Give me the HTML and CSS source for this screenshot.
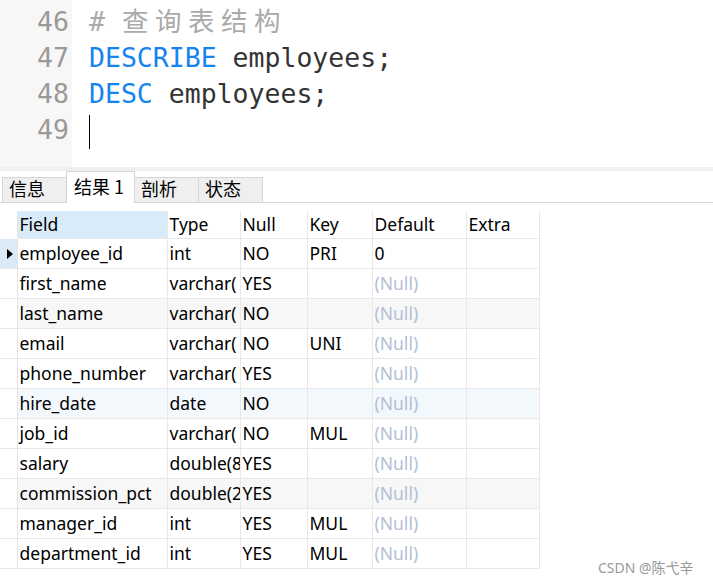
FILE: index.html
```
<!DOCTYPE html>
<html>
<head>
<meta charset="utf-8">
<link rel="stylesheet" href="styles.css">
</head>
<body>
<div class="editor">
  <div class="gutter">
    <div class="ln">46</div>
    <div class="ln">47</div>
    <div class="ln">48</div>
    <div class="ln">49</div>
  </div>
  <div class="code">
    <div class="line comment"># <span class="cjk">查询表结构</span></div>
    <div class="line"><span class="kw">DESCRIBE</span> employees;</div>
    <div class="line"><span class="kw">DESC</span> employees;</div>
    <div class="line"><span class="caret"></span></div>
  </div>
</div>
<div class="sep"></div>
<div class="tabs">
  <div class="tab">信息</div>
  <div class="tab active">结果 1</div>
  <div class="tab">剖析</div>
  <div class="tab">状态</div>
</div>
<div class="result">
  <table class="grid">
    <colgroup>
      <col class="c-ind"><col class="c-field"><col class="c-type"><col class="c-null"><col class="c-key"><col class="c-def"><col class="c-extra">
    </colgroup>
    <thead>
      <tr class="head">
        <th class="ind"></th><th class="sel">Field</th><th>Type</th><th>Null</th><th>Key</th><th>Default</th><th>Extra</th>
      </tr>
    </thead>
    <tbody>
      <tr><td class="ind cur"><span class="tri"></span></td><td>employee_id</td><td>int</td><td>NO</td><td>PRI</td><td>0</td><td></td></tr>
      <tr><td class="ind"></td><td>first_name</td><td>varchar(</td><td>YES</td><td></td><td class="nul">(Null)</td><td></td></tr>
      <tr class="alt"><td class="ind"></td><td>last_name</td><td>varchar(</td><td>NO</td><td></td><td class="nul">(Null)</td><td></td></tr>
      <tr><td class="ind"></td><td>email</td><td>varchar(</td><td>NO</td><td>UNI</td><td class="nul">(Null)</td><td></td></tr>
      <tr><td class="ind"></td><td>phone_number</td><td>varchar(</td><td>YES</td><td></td><td class="nul">(Null)</td><td></td></tr>
      <tr class="hover"><td class="ind"></td><td>hire_date</td><td>date</td><td>NO</td><td></td><td class="nul">(Null)</td><td></td></tr>
      <tr><td class="ind"></td><td>job_id</td><td>varchar(</td><td>NO</td><td>MUL</td><td class="nul">(Null)</td><td></td></tr>
      <tr><td class="ind"></td><td>salary</td><td>double(8</td><td>YES</td><td></td><td class="nul">(Null)</td><td></td></tr>
      <tr class="alt"><td class="ind"></td><td>commission_pct</td><td>double(2</td><td>YES</td><td></td><td class="nul">(Null)</td><td></td></tr>
      <tr><td class="ind"></td><td>manager_id</td><td>int</td><td>YES</td><td>MUL</td><td class="nul">(Null)</td><td></td></tr>
      <tr><td class="ind"></td><td>department_id</td><td>int</td><td>YES</td><td>MUL</td><td class="nul">(Null)</td><td></td></tr>
    </tbody>
  </table>
  <div class="mark">CSDN @陈弋辛</div>
</div>
</body>
</html>
```
FILE: styles.css
```
html, body {
  margin: 0;
  padding: 0;
  background: #fff;
}
body {
  width: 713px;
  height: 584px;
  overflow: hidden;
  position: relative;
  font-family: "Noto Sans", "Noto Sans CJK SC", sans-serif;
}
.editor {
  display: flex;
  height: 167px;
  font-family: "DejaVu Sans Mono", "Noto Sans CJK SC", monospace;
  font-size: 26.5px;
}
.gutter {
  width: 72px;
  background: #f7f7f7;
  padding-top: 4px;
  box-sizing: border-box;
  color: #999;
  text-align: right;
}
.ln {
  height: 36px;
  line-height: 36px;
  padding-right: 3px;
}
.code {
  flex: 1;
  padding-top: 4px;
  padding-left: 17px;
  color: #333;
}
.line {
  height: 36px;
  line-height: 36px;
  white-space: pre;
}
.comment { color: #aaa; }
.cjk { letter-spacing: 6.5px; margin-left: 1px; }
.kw { color: #1684ee; }
.caret {
  display: inline-block;
  width: 1px;
  height: 34px;
  background: #000;
  vertical-align: middle;
  margin-top: 1px;
}
.sep {
  height: 4px;
  background: #efefef;
}
.tabs {
  display: flex;
  align-items: flex-end;
  height: 31px;
  padding-left: 2px;
  border-bottom: 1px solid #d8d8d8;
  font-family: "Noto Sans CJK SC", sans-serif;
  font-size: 18px;
  color: #000;
}
.tab {
  height: 25px;
  line-height: 21px;
  box-sizing: border-box;
  background: #efefef;
  border: 1px solid #d6d6d6;
  border-bottom: none;
  padding-left: 6px;
  width: 65px;
}
.tab + .tab { margin-left: -1px; }
.tab.active {
  line-height: 28px;
  background: #fff;
  width: 69px;
  padding-left: 7px;
  position: relative;
  margin-bottom: -1px;
  height: 32px;
}
.result {
  padding-top: 8px;
}
.grid {
  border-collapse: collapse;
  table-layout: fixed;
  width: 539px;
  font-size: 17.5px;
  color: #000;
}
.c-ind { width: 17px; }
.c-field { width: 150px; }
.c-type { width: 73px; }
.c-null { width: 67px; }
.c-key { width: 65px; }
.c-def { width: 94px; }
.c-extra { width: 73px; }
.grid th, .grid td {
  height: 29px;
  padding: 0 0 0 2px;
  text-align: left;
  font-weight: normal;
  white-space: nowrap;
  overflow: hidden;
  border-right: 1px solid #e8e8e8;
  border-bottom: 1px solid #e8e8e8;
  line-height: 29px;
}
.grid th { height: 27px; line-height: 27px; }
.grid .ind { padding: 0; border-right: 1px solid #e3e3e3; }
.grid th.ind { border-bottom-color: #fff; }
.grid th.sel { background: #d9eaf8; }
.grid td.cur { background: #dce9f6; position: relative; }
.tri {
  display: block;
  width: 0;
  height: 0;
  margin-left: 7px;
  border-left: 6px solid #000;
  border-top: 5px solid transparent;
  border-bottom: 5px solid transparent;
}
.grid tr.alt td { background: #f7f7f7; }
.grid tr.hover td { background: #f3f8fd; }
.grid tr.alt td.ind, .grid tr.hover td.ind { background: #fff; }
.nul { color: #b3bfd6; }
.mark {
  position: absolute;
  left: 598px;
  top: 557px;
  font-size: 14px;
  color: #999;
  font-family: "Noto Sans", "Noto Sans CJK SC", sans-serif;
}
```
